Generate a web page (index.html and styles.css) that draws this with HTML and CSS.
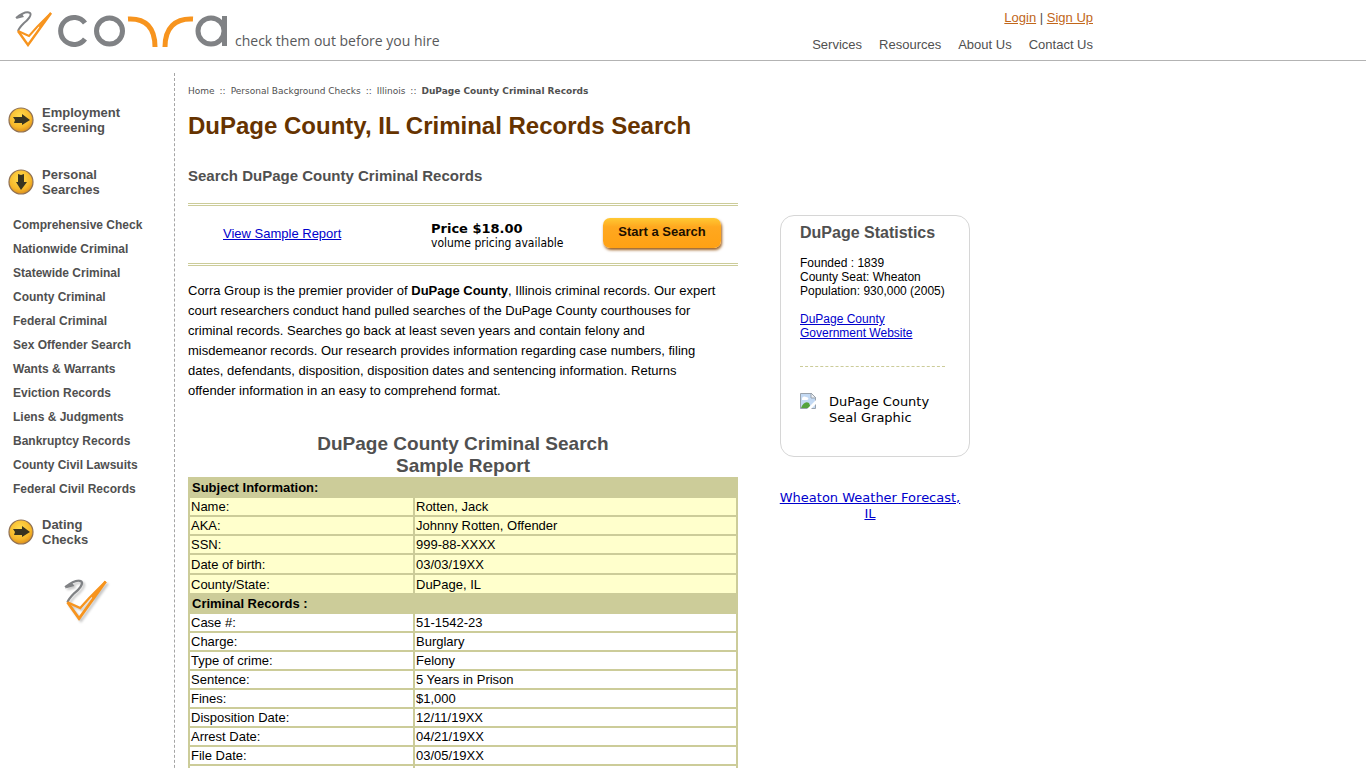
FILE: index.html
```html
<!DOCTYPE html>
<html lang="en">
<head>
<meta charset="utf-8">
<title>DuPage County Criminal Records</title>
<link rel="stylesheet" href="styles.css">
</head>
<body>
<svg class="defs" aria-hidden="true">
  <defs>
    <radialGradient id="gold" cx="45%" cy="35%" r="65%"><stop offset="0" stop-color="#ffdc50"/><stop offset="0.7" stop-color="#f7b82a"/><stop offset="1" stop-color="#dc8f1c"/></radialGradient>
    <symbol id="tick" viewBox="0 0 38 36">
      <path d="M1 7C6 3 12 0 15 2C17 4 13 9 9 12C6 15 4 17 3 20" fill="none" stroke="#808285" stroke-width="2"/>
      <path d="M1 8L7 3L9 6Z" fill="#808285"/>
      <path d="M3 20L13 34L36 2" fill="none" stroke="#f7941e" stroke-width="2.4"/>
      <path d="M3 20L14 25L22 16L36 2" fill="none" stroke="#f7941e" stroke-width="2"/>
      <path d="M24 15L36 2L25 18Z" fill="#f7941e"/>
    </symbol>
    <symbol id="disc" viewBox="0 0 26 26"><circle cx="13" cy="13" r="12" fill="url(#gold)" stroke="#8f7155" stroke-width="1.2"/></symbol>
    <symbol id="arrow" viewBox="0 0 26 26"><path d="M5 10L14 10L14 7L22 13L14 18L14 16L6 16L7 13Z" fill="#38331f"/></symbol>
  </defs>
</svg>
<header class="header">
  <div class="header-inner">
    <a class="brand" href="#" aria-label="Corra home">
      <svg class="logo" viewBox="0 0 214 38" width="214" height="38" fill="none">
        <use href="#tick" x="0" y="0" width="38" height="36"/>
        <g stroke="#808285" stroke-width="5">
          <path d="M70 12A13.500 13.500 0 1 0 70 28"/>
          <circle cx="94.500" cy="20" r="13"/>
          <circle cx="196" cy="20" r="13"/>
          <path d="M209.500 5V35"/>
        </g>
        <path d="M113 8C131 7 140 17 140 36M178 8C160 7 150 17 150 36" stroke="#f7941e" stroke-width="5"/>
      </svg>
      <span class="tagline">check them out before you hire</span>
    </a>
    <div class="header-links">
      <div class="account"><a href="#">Login</a> | <a href="#">Sign Up</a></div>
      <nav class="topnav"><a href="#">Services</a><a href="#">Resources</a><a href="#">About Us</a><a href="#">Contact Us</a></nav>
    </div>
  </div>
</header>
<div class="page">
  <nav class="sidebar">
    <a class="section" href="#"><svg width="26" height="26"><use href="#disc"/><use href="#arrow"/></svg><span>Employment<br>Screening</span></a>
    <a class="section" href="#"><svg width="26" height="26"><use href="#disc"/><path d="M10 5L13 6L16 5L16 13L19 13L13 21L8 13L10 13Z" fill="#38331f"/></svg><span>Personal<br>Searches</span></a>
    <ul class="searches">
      <li><a href="#">Comprehensive Check</a></li>
      <li><a href="#">Nationwide Criminal</a></li>
      <li><a href="#">Statewide Criminal</a></li>
      <li><a href="#">County Criminal</a></li>
      <li><a href="#">Federal Criminal</a></li>
      <li><a href="#">Sex Offender Search</a></li>
      <li><a href="#">Wants &amp; Warrants</a></li>
      <li><a href="#">Eviction Records</a></li>
      <li><a href="#">Liens &amp; Judgments</a></li>
      <li><a href="#">Bankruptcy Records</a></li>
      <li><a href="#">County Civil Lawsuits</a></li>
      <li><a href="#">Federal Civil Records</a></li>
    </ul>
    <a class="section" href="#"><svg width="26" height="26"><use href="#disc"/><use href="#arrow"/></svg><span>Dating<br>Checks</span></a>
    <svg class="mark" width="44" height="42" viewBox="0 0 38 36"><use href="#tick" width="38" height="36"/></svg>
  </nav>
  <main class="content">
    <div class="crumbs"><a href="#">Home</a><i>::</i><a href="#">Personal Background Checks</a><i>::</i><a href="#">Illinois</a><i>::</i><b>DuPage County Criminal Records</b></div>
    <h1>DuPage County, IL Criminal Records Search</h1>
    <h2>Search DuPage County Criminal Records</h2>
    <div class="offer">
      <a class="sample" href="#">View Sample Report</a>
      <div class="price"><b>Price $18.00</b><span>volume pricing available</span></div>
      <button class="start" type="button">Start a Search</button>
    </div>
    <p class="intro">Corra Group is the premier provider of <b>DuPage County</b>, Illinois criminal records. Our expert court researchers conduct hand pulled searches of the DuPage County courthouses for criminal records. Searches go back at least seven years and contain felony and misdemeanor records. Our research provides information regarding case numbers, filing dates, defendants, disposition, disposition dates and sentencing information. Returns offender information in an easy to comprehend format.</p>
    <table class="report">
      <caption>DuPage County Criminal Search<br>Sample Report</caption>
      <colgroup><col class="label-col"><col></colgroup>
      <tbody class="subject">
        <tr><th colspan="2">Subject Information:</th></tr>
        <tr><td>Name:</td><td>Rotten, Jack</td></tr>
        <tr><td>AKA:</td><td>Johnny Rotten, Offender</td></tr>
        <tr><td>SSN:</td><td>999-88-XXXX</td></tr>
        <tr class="tall"><td>Date of birth:</td><td>03/03/19XX</td></tr>
        <tr class="tall"><td>County/State:</td><td>DuPage, IL</td></tr>
      </tbody>
      <tbody>
        <tr><th colspan="2">Criminal Records :</th></tr>
        <tr><td>Case #:</td><td>51-1542-23</td></tr>
        <tr><td>Charge:</td><td>Burglary</td></tr>
        <tr><td>Type of crime:</td><td>Felony</td></tr>
        <tr><td>Sentence:</td><td>5 Years in Prison</td></tr>
        <tr><td>Fines:</td><td>$1,000</td></tr>
        <tr><td>Disposition Date:</td><td>12/11/19XX</td></tr>
        <tr><td>Arrest Date:</td><td>04/21/19XX</td></tr>
        <tr><td>File Date:</td><td>03/05/19XX</td></tr>
        <tr><td></td><td></td></tr>
      </tbody>
    </table>
  </main>
  <aside class="aside">
    <section class="stats">
      <h3>DuPage Statistics</h3>
      <p>Founded : 1839<br>County Seat: Wheaton<br>Population: 930,000 (2005)</p>
      <p><a href="#">DuPage County<br>Government Website</a></p>
      <hr>
      <div class="seal">
        <svg width="16" height="16" viewBox="0 0 16 16">
          <path d="M0.500 0.500H11L15.500 5V15.500H0.500Z" fill="#c3d9f3" stroke="#9aa3ad"/>
          <path d="M2 6C2 3 5 3 6 4C9 4 9 7 7 7H2Z" fill="#fff"/>
          <path d="M1 15C3 10 6 8 9 10L11 15Z" fill="#55a33c"/>
          <path d="M7 16L16 7V11L11 16Z" fill="#fff"/>
          <path d="M11 0V5H16Z" fill="#eef1f5" stroke="#9aa3ad"/>
        </svg>
        <span>DuPage County<br>Seal Graphic</span>
      </div>
    </section>
    <a class="weather" href="#">Wheaton Weather Forecast,<br>IL</a>
  </aside>
</div>
</body>
</html>
```
FILE: styles.css
```css
body {
  margin: 0;
  background: #fff;
  color: #000;
  font: 13px/20px "Liberation Sans", Arial, sans-serif;
}
a { color: #0000cc; }
h1, h2, h3, p, ul { margin: 0; padding: 0; }
.defs { position: absolute; width: 0; height: 0; }

.header { border-bottom: 1px solid #b3b3b3; }
.header-inner {
  display: flex;
  justify-content: space-between;
  max-width: 1093px;
  min-height: 60px;
}
.brand {
  display: flex;
  align-items: flex-start;
  gap: 6px;
  padding: 11px 0 0 15px;
  color: #58595b;
  text-decoration: none;
}
.tagline { padding-top: 20px; font: 14px/20px "Open Sans", sans-serif; }
.header-links { padding-top: 8px; color: #505050; text-align: right; }
.account a { color: #c1661a; }
.topnav { display: flex; gap: 17px; padding-top: 7px; }
.topnav a { color: #505050; text-decoration: none; }

.page { display: flex; align-items: flex-start; }
.sidebar {
  box-sizing: border-box;
  flex: 0 0 175px;
  min-height: 740px;
  margin-top: 12px;
  padding: 32px 0 0 8px;
  border-right: 1px dashed #a5a5a5;
}
.section {
  display: flex;
  align-items: center;
  gap: 8px;
  margin-bottom: 32px;
  color: #505050;
  font-weight: bold;
  line-height: 15px;
  text-decoration: none;
}
.searches { margin: -16px 0 16px 5px; list-style: none; }
.searches li { font-size: 12px; line-height: 24px; }
.searches a { color: #505050; font-weight: bold; text-decoration: none; }
.mark { display: block; margin-left: 56px; filter: drop-shadow(2px 2px 1px #c8c8c8); }

.content { flex: 0 1 550px; padding: 20px 0 0 13px; }
.crumbs { color: #505050; font: 9px/20px "DejaVu Sans", Verdana, sans-serif; }
.crumbs i { padding: 0 5px; font-style: normal; }
.crumbs a { color: inherit; text-decoration: none; }
h1 { padding-top: 10px; color: #663300; font-size: 24px; line-height: 30px; }
h2 { padding: 24px 0 16px; color: #505050; font-size: 15px; line-height: 22px; }
.offer {
  display: grid;
  grid-template: 32px / 208px 172px 1fr;
  align-items: center;
  padding: 12px 0 13px 35px;
  border: 3px double #cccc99;
  border-width: 3px 0;
}
.price {
  display: flex;
  flex-direction: column;
  padding-top: 4px;
  font: 12px/14px "DejaVu Sans Condensed", "DejaVu Sans", Tahoma, sans-serif;
}
.price b { font: bold 13px/14px "DejaVu Sans", Verdana, sans-serif; }
.start {
  align-self: start;
  justify-self: start;
  width: 118px;
  height: 30px;
  padding: 0 0 4px;
  border: 0;
  border-radius: 7px;
  background: linear-gradient(#ffc933, #ffa81f 30%, #ffa114);
  box-shadow: 1px 2px 3px #9a5c1c;
  color: #1c0f00;
  font: bold 13px "Liberation Sans", Arial, sans-serif;
}
.intro { padding: 15px 20px 32px 0; }

.report {
  width: 100%;
  border-spacing: 2px;
  background: #cccc99;
  line-height: 15px;
  table-layout: fixed;
}
.report caption {
  color: #505050;
  font-size: 19px;
  font-weight: bold;
  line-height: 22px;
}
.label-col { width: 223px; }
.report td { height: 15px; padding: 1px; background: #fff; }
.report th { padding: 1px 2px; text-align: left; }
.report .subject td { background: #ffffcc; }
.report .tall td { height: 16px; }

.aside { flex: 0 1 190px; padding: 154px 0 0 42px; }
.stats {
  padding: 7px 24px 30px 19px;
  border: 1px solid #d6d6d6;
  border-radius: 14px;
  font-size: 12px;
  line-height: 14px;
}
.stats h3 { color: #505050; font-size: 16px; line-height: 20px; }
.stats p { padding-top: 14px; white-space: nowrap; }
.stats p:first-of-type { padding-top: 13px; }
.stats hr { margin: 26px 0; border: 0; border-top: 1px dashed #cccc99; }
.seal {
  display: flex;
  align-items: flex-start;
  gap: 13px;
  font: 13px/16px "DejaVu Sans", Verdana, sans-serif;
}
.seal svg { flex: none; }
.seal span { padding-top: 1px; white-space: nowrap; }
.weather {
  display: block;
  margin: 33px 5px 0 -5px;
  font: 13px/16px "DejaVu Sans", Verdana, sans-serif;
  text-align: center;
}
```
